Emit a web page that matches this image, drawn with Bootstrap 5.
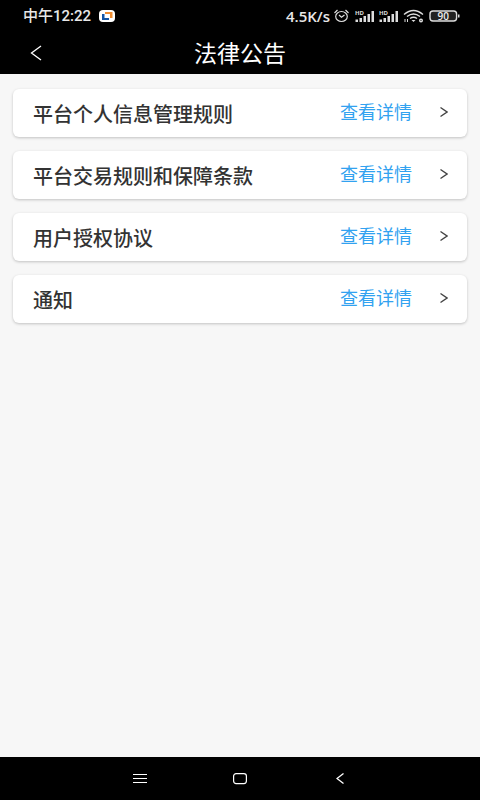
<!DOCTYPE html>
<html lang="zh-CN">
<head>
<meta charset="utf-8">
<meta name="viewport" content="width=device-width, initial-scale=1">
<title>法律公告</title>
<link href="https://cdn.jsdelivr.net/npm/bootstrap@5.3.0/dist/css/bootstrap.min.css" rel="stylesheet">
<style>
body { background: #f7f7f7; font-family: Roboto, "Noto Sans CJK SC", sans-serif; }
svg { display: block; flex: none; }
.status-bar { height: 32px; padding: 0 20px 0 23px; font-size: 15px; line-height: 20px; font-weight: 500; color: #e8e8e8; }
.status-speed { font-family: "Open Sans", sans-serif; font-weight: 600; }
.title-bar { height: 42px; grid-template-columns: 72px 1fr 72px; }
.title-text { font-size: 23px; line-height: 32px; padding-top: 3px; }
.notice-list { padding: 15px 13px; gap: 14px; }
.notice { height: 48px; padding: 0 19px 0 20px; border-radius: 6px; box-shadow: 0 1px 3px rgba(0, 0, 0, .22); }
.notice-name { font-size: 20px; line-height: 28px; padding-top: 3px; font-weight: 500; color: #333; }
.notice-link { font-size: 18px; line-height: 26px; color: #32a2f0; gap: 28px; }
.notice-link svg { margin-bottom: 2px; }
.system-nav { height: 43px; gap: 64px; }
.system-nav .btn { width: 36px; }
</style>
<script defer src="https://cdn.jsdelivr.net/npm/bootstrap@5.3.0/dist/js/bootstrap.bundle.min.js"></script>
</head>
<body class="min-vh-100 d-flex flex-column">
<header class="bg-black text-white">
  <div class="status-bar d-flex align-items-center justify-content-between">
    <div class="d-flex align-items-center gap-2">
      <span>中午12:22</span>
      <svg width="16" height="12" viewBox="0 0 16 12" aria-hidden="true"><rect width="16" height="12" rx="4" fill="#fff"/><path d="M6 2h7.500v6H11V4H6z" fill="#ef8d32"/><path d="M3 4h2.500v4H10v2H3z" fill="#1354a5"/></svg>
    </div>
    <div class="d-flex align-items-center gap-1">
      <span class="status-speed">4.5K/s</span>
      <svg width="17" height="14" viewBox="0 0 17 14" fill="none" stroke="#ddd" stroke-width="1.2" aria-hidden="true"><ellipse cx="7.500" cy="7.500" rx="5.800" ry="5"/><path d="M.5 4l3-3M14.500 4l-3-3M5 6l2.500 2.300L10.500 6"/></svg>
      <svg width="20" height="14" viewBox="0 0 20 14" aria-hidden="true"><text x="0" y="6" font-family="Open Sans, sans-serif" font-size="6" font-weight="700" fill="#ddd">HD</text><path d="M.5 10.500H3V13H.5zM4.500 9H7v4H4.500zM8.500 7H11v6H8.500zM12.500 5H15v8h-2.500zM16.500 2H19v11h-2.500z" fill="#ddd"/></svg>
      <svg width="20" height="14" viewBox="0 0 20 14" aria-hidden="true"><text x="0" y="6" font-family="Open Sans, sans-serif" font-size="6" font-weight="700" fill="#ddd">HD</text><path d="M.5 10.500H3V13H.5zM4.500 9H7v4H4.500zM8.500 7H11v6H8.500zM12.500 5H15v8h-2.500zM16.500 2H19v11h-2.500z" fill="#ddd"/></svg>
      <svg width="22" height="14" viewBox="0 0 22 14" fill="none" stroke="#ddd" stroke-width="1.400" aria-hidden="true"><path d="M1 5.500q9.500-8 19 0M4 7.500q6.500-5 13 0M7 9.500q3.500-2.500 7 0"/><path d="M8.500 11h4l-2 2z" fill="#ddd" stroke="none"/><path d="M2 10v3M4.500 10v3" stroke-width="1"/><circle cx="18" cy="11.500" r="1.300"/></svg>
      <svg width="31" height="12" viewBox="0 0 31 12" aria-hidden="true"><rect x="1" y="1" width="26.600" height="10" rx="3" fill="#222" stroke="#ddd" stroke-width="1.400"/><path d="M29 4.500h1.500v3H29z" fill="#ddd"/><text x="14.300" y="9.500" text-anchor="middle" font-family="Open Sans, sans-serif" font-size="10" font-weight="600" fill="#eee">90</text></svg>
    </div>
  </div>
  <div class="title-bar d-grid align-items-center">
    <button type="button" class="btn border-0 p-0 d-flex justify-content-center" aria-label="返回">
      <svg width="12" height="16" viewBox="0 0 12 16" fill="none" stroke="#fff" stroke-width="1.300"><path d="M11 1L1.500 8l9.500 7"/></svg>
    </button>
    <h1 class="title-text fw-normal text-center m-0">法律公告</h1>
  </div>
</header>
<main class="notice-list flex-grow-1 d-flex flex-column">
  <section class="notice bg-white d-flex align-items-center justify-content-between">
    <h2 class="notice-name m-0">平台个人信息管理规则</h2>
    <a href="#" class="notice-link d-flex align-items-center text-decoration-none">查看详情<svg width="8" height="12" viewBox="0 0 8 12" fill="none" stroke="#444" stroke-width="1.400" aria-hidden="true"><path d="M.5 1.500L7 6 .5 10.500"/></svg></a>
  </section>
  <section class="notice bg-white d-flex align-items-center justify-content-between">
    <h2 class="notice-name m-0">平台交易规则和保障条款</h2>
    <a href="#" class="notice-link d-flex align-items-center text-decoration-none">查看详情<svg width="8" height="12" viewBox="0 0 8 12" fill="none" stroke="#444" stroke-width="1.400" aria-hidden="true"><path d="M.5 1.500L7 6 .5 10.500"/></svg></a>
  </section>
  <section class="notice bg-white d-flex align-items-center justify-content-between">
    <h2 class="notice-name m-0">用户授权协议</h2>
    <a href="#" class="notice-link d-flex align-items-center text-decoration-none">查看详情<svg width="8" height="12" viewBox="0 0 8 12" fill="none" stroke="#444" stroke-width="1.400" aria-hidden="true"><path d="M.5 1.500L7 6 .5 10.500"/></svg></a>
  </section>
  <section class="notice bg-white d-flex align-items-center justify-content-between">
    <h2 class="notice-name m-0">通知</h2>
    <a href="#" class="notice-link d-flex align-items-center text-decoration-none">查看详情<svg width="8" height="12" viewBox="0 0 8 12" fill="none" stroke="#444" stroke-width="1.400" aria-hidden="true"><path d="M.5 1.500L7 6 .5 10.500"/></svg></a>
  </section>
</main>
<nav class="system-nav bg-black d-flex align-items-center justify-content-center" aria-label="系统导航">
  <button type="button" class="btn border-0 p-0 d-flex justify-content-center" aria-label="菜单"><svg width="14" height="12" viewBox="0 0 14 12" stroke="#fff"><path d="M0 1.500h14M0 5.500h14M0 9.500h14"/></svg></button>
  <button type="button" class="btn border-0 p-0 d-flex justify-content-center" aria-label="主页"><svg width="14" height="12" viewBox="0 0 14 12" fill="none" stroke="#fff" stroke-width="1.200"><rect x=".6" y=".6" width="12.800" height="10" rx="2.500"/></svg></button>
  <button type="button" class="btn border-0 p-0 d-flex justify-content-center" aria-label="后退"><svg width="8" height="12" viewBox="0 0 8 12" fill="none" stroke="#fff" stroke-width="1.300"><path d="M7.500 .5L1 5.500l6.500 5"/></svg></button>
</nav>
</body>
</html>
